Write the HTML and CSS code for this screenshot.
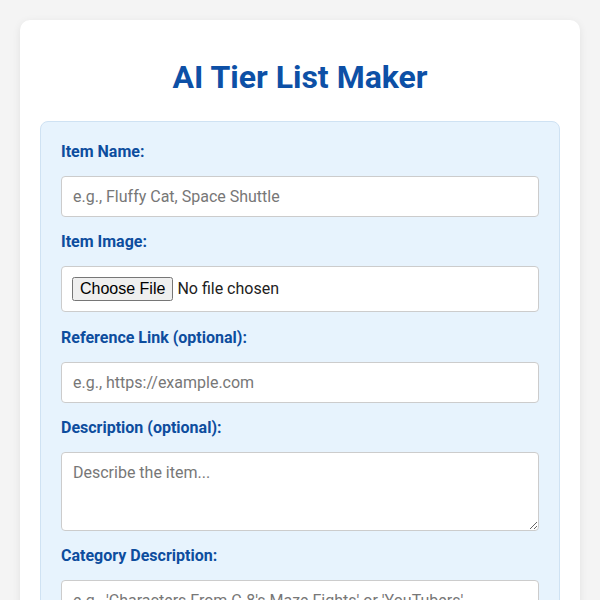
FILE: index.html
```html
<!DOCTYPE html>
<html lang="en">
<head>
<meta charset="utf-8">
<title>AI Tier List Maker</title>
<link rel="stylesheet" href="styles.css">
</head>
<body>
<div class="container">
  <h1 class="title">AI Tier List Maker</h1>
  <div class="panel">
    <label class="field-label" for="name">Item Name:</label>
    <input class="field" id="name" type="text" placeholder="e.g., Fluffy Cat, Space Shuttle">
    <label class="field-label" for="image">Item Image:</label>
    <input class="field file-field" id="image" type="file">
    <label class="field-label" for="link">Reference Link (optional):</label>
    <input class="field" id="link" type="text" placeholder="e.g., https://example.com">
    <label class="field-label" for="desc">Description (optional):</label>
    <textarea class="field area" id="desc" placeholder="Describe the item..."></textarea>
    <label class="field-label" for="cat">Category Description:</label>
    <input class="field" id="cat" type="text" placeholder="e.g., 'Characters From C-8's Maze Fights' or 'YouTubers'">
  </div>
</div>
</body>
</html>
```
FILE: styles.css
```css
html, body {
  margin: 0;
  padding: 0;
}
body {
  background: #f4f4f4;
  font-family: Roboto, "Liberation Sans", sans-serif;
  padding: 20px;
}
.container {
  background: #ffffff;
  border-radius: 10px;
  box-shadow: 0 2px 8px rgba(0, 0, 0, 0.08);
  padding: 20px 20px 30px;
}
.title {
  margin: 18px 0 25px;
  text-align: center;
  font-size: 32px;
  line-height: 38px;
  font-weight: 700;
  color: #0d50a6;
}
.panel {
  background: #e7f3fd;
  border: 1px solid #cfe2f3;
  border-radius: 8px;
  padding: 20px 20px;
  display: flex;
  flex-direction: column;
}
.field-label {
  display: block;
  font-size: 16px;
  line-height: 19px;
  font-weight: 700;
  color: #0d4d9e;
  margin-bottom: 15px;
}
.field {
  box-sizing: border-box;
  width: 100%;
  font-family: Roboto, "Liberation Sans", sans-serif;
  font-size: 16px;
  line-height: 19px;
  padding: 10px 11px;
  border: 1px solid #cccccc;
  border-radius: 4px;
  background: #ffffff;
  color: #222;
  margin: 0 0 15px;
  height: 41px;
}
.field::placeholder {
  color: #777;
}
.file-field {
  height: 46px;
  padding: 10px 10px;
  margin-bottom: 16px;
}
.area {
  height: 79px;
  resize: vertical;
  display: block;
}
```
